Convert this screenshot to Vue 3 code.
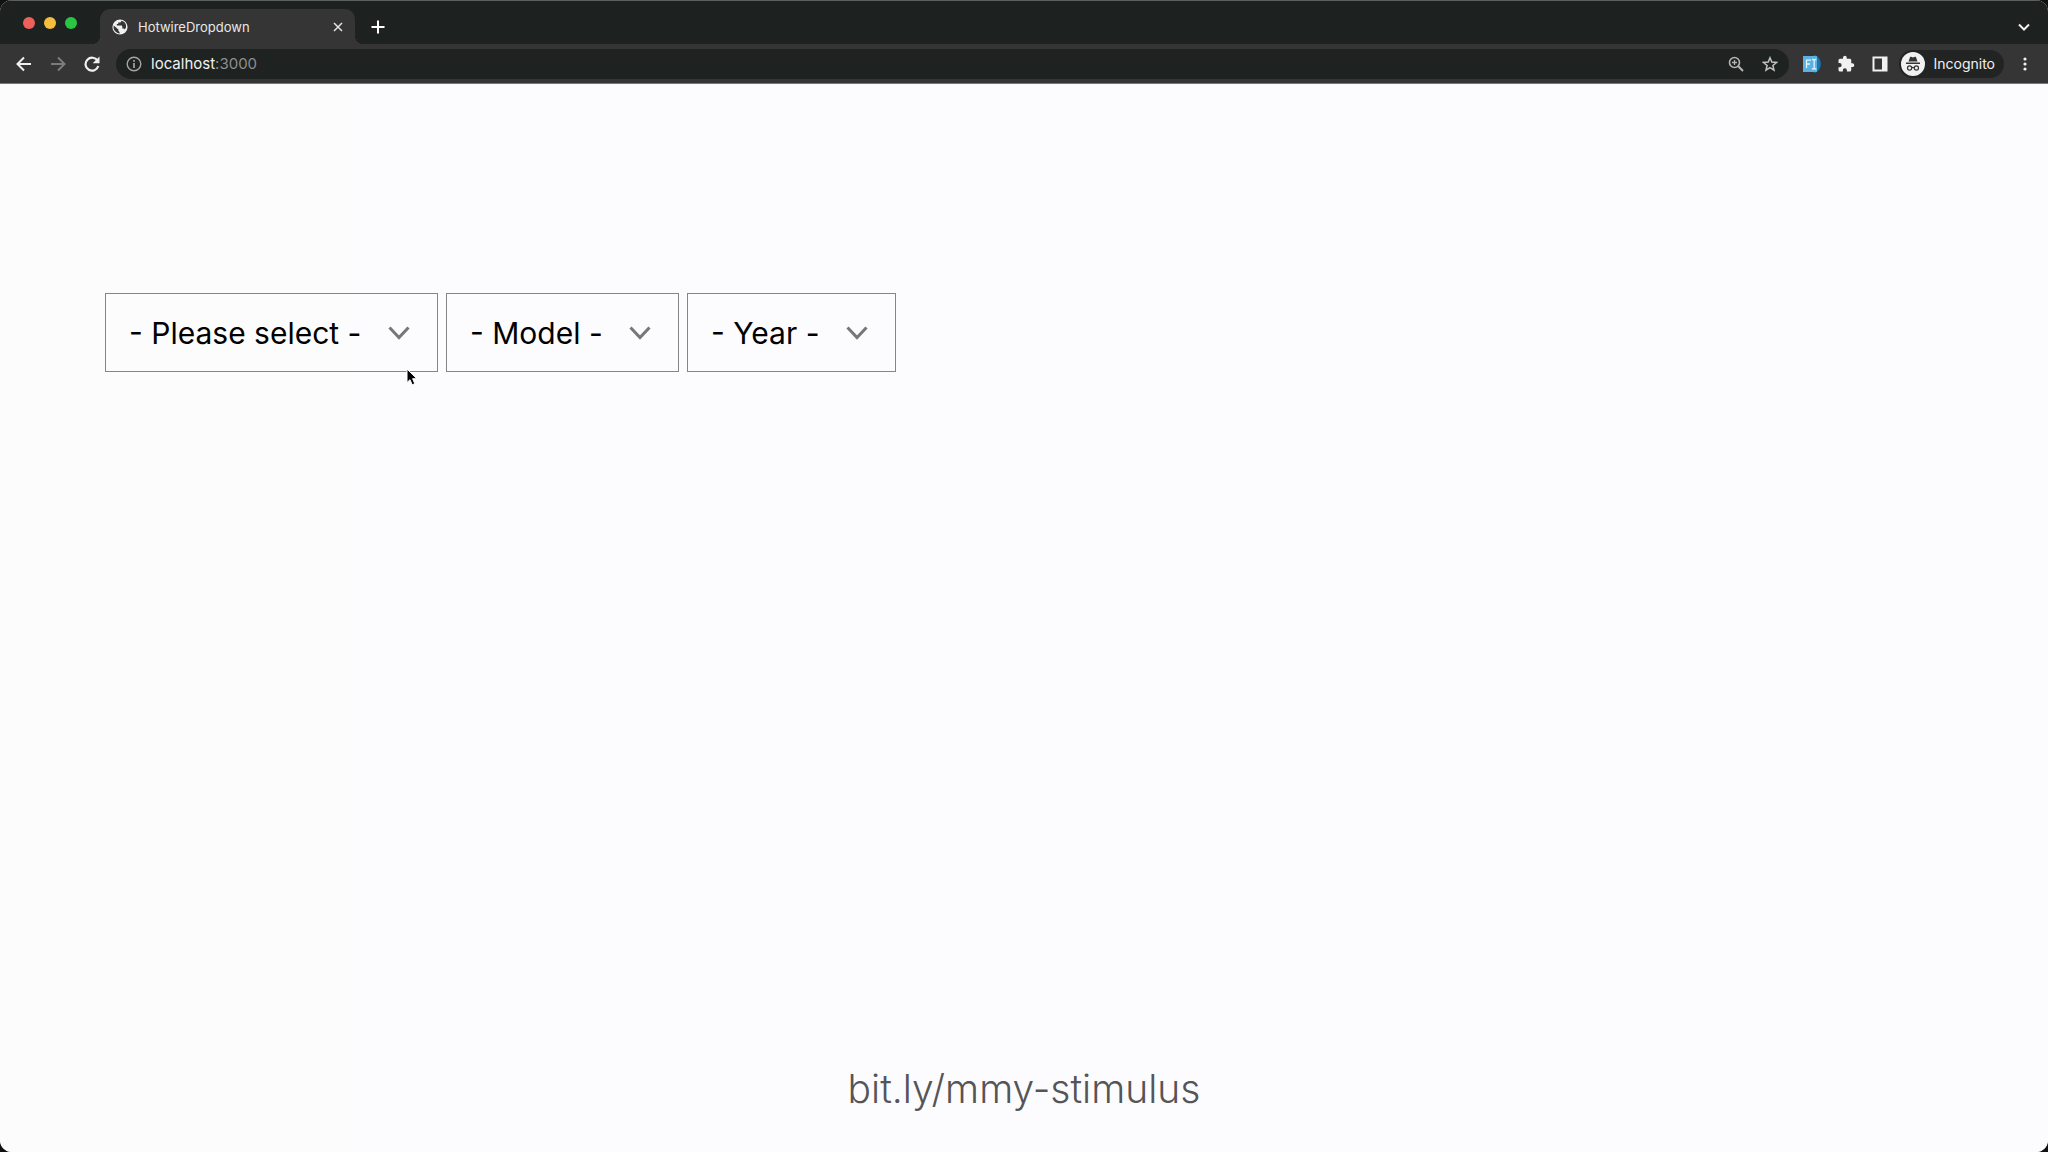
<script setup>
import { ref } from 'vue'

const address = ref('localhost:3000')
const selects = [
  { id: 'make', label: 'Make', prompt: '- Please select -' },
  { id: 'model', label: 'Model', prompt: '- Model -' },
  { id: 'year', label: 'Year', prompt: '- Year -' },
]
</script>

<template>
  <div class="desktop">
    <div class="window">
      <header class="tabstrip">
        <div class="lights">
          <button class="light red" aria-label="Close window"></button>
          <button class="light yellow" aria-label="Minimise window"></button>
          <button class="light green" aria-label="Zoom window"></button>
        </div>
        <div class="tab">
          <svg class="globe" viewBox="0 0 16 16" aria-hidden="true">
            <circle cx="8" cy="8" r="7.6" fill="#f1f1f1" />
            <path d="M1.7 6.6l4.7 4v1.2l1.2 1.4v1.3C3.6 14.2.8 10.6 1.7 6.6zM9.3 1.8c0 1.2-.7 1.8-1.8 1.8H6.2v1.5H4.8v1.5h4.6c.6 0 .9.4.9.9v2h1c.7 0 1.2.5 1.5 1.1C15.6 7.200 13.800 2.900 9.300 1.800z" fill="#353535" />
          </svg>
          <span class="title">HotwireDropdown</span>
          <button class="icon close" aria-label="Close tab">
            <svg viewBox="0 0 10 10" width="10" height="10"><path d="M1 1l8 8M9 1L1 9" stroke="#e4e4e4" stroke-width="1.5" /></svg>
          </button>
        </div>
        <button class="icon add" aria-label="New tab">
          <svg viewBox="0 0 14 14" width="14" height="14"><path d="M7 .5v13M.5 7h13" stroke="#fff" stroke-width="2" /></svg>
        </button>
        <button class="icon search-tabs" aria-label="Search tabs">
          <svg viewBox="0 0 12 8" width="12" height="8"><path d="M1 1.500l5 5 5-5" fill="none" stroke="#f1f1f1" stroke-width="2" /></svg>
        </button>
      </header>

      <nav class="toolbar">
        <button class="icon" aria-label="Back">
          <svg viewBox="0 0 16 16" width="16" height="16"><path d="M15 8H2M8 1.500L1.500 8 8 14.500" fill="none" stroke="#f1f1f1" stroke-width="2" /></svg>
        </button>
        <button class="icon" aria-label="Forward">
          <svg viewBox="0 0 16 16" width="16" height="16"><path d="M1 8h13M8 1.500L14.500 8 8 14.500" fill="none" stroke="#7c7c7c" stroke-width="2" /></svg>
        </button>
        <button class="icon" aria-label="Reload">
          <svg viewBox="0 0 16 16" width="16" height="16"><path d="M13.600 4.800A6.500 6.500 0 1 0 14.300 10" fill="none" stroke="#f1f1f1" stroke-width="2.200" /><path d="M15.500.5v6.800H8.700z" fill="#f1f1f1" /></svg>
        </button>
        <div class="omnibox">
          <svg viewBox="0 0 16 16" width="16" height="16" aria-hidden="true"><circle cx="8" cy="8" r="6.800" fill="none" stroke="#a5a5a5" stroke-width="1.400" /><path d="M8 7v5M8 4v1.800" stroke="#a5a5a5" stroke-width="1.700" /></svg>
          <a class="address" href="#" :aria-label="address">localhost<span class="port">:3000</span></a>
          <button class="icon" aria-label="Page zoom">
            <svg viewBox="0 0 16 16" width="16" height="16"><circle cx="6.500" cy="6.500" r="5" fill="none" stroke="#b5b5b5" stroke-width="1.600" /><path d="M10.300 10.300L15 15" stroke="#b5b5b5" stroke-width="2" /><path d="M6.500 4v5M4 6.500h5" stroke="#b5b5b5" stroke-width="1.300" /></svg>
          </button>
          <button class="icon" aria-label="Bookmark this page">
            <svg viewBox="0 0 16 16" width="16" height="16"><path d="M8 1.800l1.800 4.300 4.700.4-3.600 3 1.100 4.600L8 11.700l-4 2.400 1.100-4.600-3.600-3 4.700-.4z" fill="none" stroke="#c0c0c0" stroke-width="1.500" /></svg>
          </button>
        </div>
        <div class="extensions">
          <button class="icon" aria-label="Form filler">
            <svg viewBox="0 0 18 18" width="18" height="18"><path d="M11 0c9 2 9 16 0 18z" fill="#1677b4" /><path d="M0 1h14v16H0z" fill="#5ab2e2" /><path d="M3.500 13V5.200H8M3.500 9H7M9 4.500h1.200l1 1 1-1h1.200M9 14h1.200l1-1 1 1h1.200M11.200 5.500v7.500" fill="none" stroke="#e2f3fc" stroke-width="1.300" /></svg>
          </button>
          <button class="icon" aria-label="Extensions">
            <svg viewBox="0 0 24 24" width="18" height="18"><path d="M20.500 11H19V7c0-1.100-.9-2-2-2h-4V3.500a2.500 2.500 0 0 0-5 0V5H4a2 2 0 0 0-2 2v3.800h1.500a2.700 2.700 0 0 1 0 5.400H2V20c0 1.100.9 2 2 2h3.800v-1.500a2.700 2.700 0 0 1 5.400 0V22H17a2 2 0 0 0 2-2v-4h1.500a2.500 2.500 0 0 0 0-5z" fill="#f1f1f1" /></svg>
          </button>
          <button class="icon" aria-label="Side panel">
            <svg viewBox="0 0 16 16" width="16" height="16"><path d="M1.500 1.500h13v13h-13z" fill="none" stroke="#f1f1f1" stroke-width="2" /><path d="M10 1h5v14h-5z" fill="#f1f1f1" /></svg>
          </button>
        </div>
        <button class="profile">
          <svg viewBox="0 0 24 24" width="24" height="24" aria-hidden="true">
            <circle cx="12" cy="12" r="12" fill="#f1f1f1" />
            <path d="M7.500 9.500L9 5.200c.2-.5.600-.6 1-.4l2 .6 2-.6c.4-.2.800-.1 1 .4l1.500 4.300zM5 10.500h14v1.400H5z" fill="#333" />
            <path d="M10.700 15.700q1.300-.8 2.600 0" fill="none" stroke="#333" stroke-width="1.200" />
            <circle cx="8.600" cy="16" r="2.100" fill="none" stroke="#333" stroke-width="1.200" /><circle cx="15.400" cy="16" r="2.100" fill="none" stroke="#333" stroke-width="1.200" />
          </svg>
          Incognito
        </button>
        <button class="icon menu" aria-label="Browser menu">
          <svg viewBox="0 0 4 14" width="4" height="14"><g fill="#f1f1f1"><circle cx="2" cy="2" r="1.600" /><circle cx="2" cy="7" r="1.600" /><circle cx="2" cy="12" r="1.600" /></g></svg>
        </button>
      </nav>

      <main class="page">
        <form class="filters">
          <div v-for="item in selects" :key="item.id" class="field">
            <select :id="item.id" :aria-label="item.label"><option>{{ item.prompt }}</option></select>
            <svg class="chevron" viewBox="0 0 22 14" aria-hidden="true"><path d="M1.500 1.500L11 11.500l9.500-10" fill="none" stroke="#777" stroke-width="3" /></svg>
          </div>
          <svg class="pointer" viewBox="0 0 12 18" aria-hidden="true"><path d="M1 1v13.500l3-2.800 2.200 5.100 2.600-1.100-2.200-5h4.200z" fill="#000" stroke="#fff" /></svg>
        </form>
        <p class="caption">bit.ly/mmy-stimulus</p>
      </main>
    </div>
  </div>
</template>

<style>
body {
  margin: 0;
  background: #111;
}
</style>

<style scoped>
.desktop {
  background: #111;
  font-family: Inter, "Liberation Sans", sans-serif;
}
.window {
  display: flex;
  flex-direction: column;
  box-sizing: border-box;
  min-height: 100vh;
  overflow: hidden;
  border-radius: 12px;
  background: #fcfcfe;
}
button {
  margin: 0;
  padding: 0;
  border: 0;
  background: none;
  font: inherit;
  color: inherit;
}
.icon {
  display: flex;
  flex: none;
  align-items: center;
  justify-content: center;
  width: 18px;
  height: 18px;
}
.tabstrip {
  display: flex;
  align-items: flex-end;
  box-sizing: border-box;
  height: 44px;
  border-top: 1px solid #5c5f5f;
  background: #1d2221;
}
.lights {
  display: flex;
  gap: 9px;
  width: 77px;
  padding: 0 0 15px 23px;
}
.light {
  width: 12px;
  height: 12px;
  border-radius: 50%;
}
.red { background: #f0605a; }
.yellow { background: #f5bd3d; }
.green { background: #2ac643; }
.tab {
  position: relative;
  display: flex;
  align-items: center;
  box-sizing: border-box;
  width: 255px;
  height: 35px;
  padding: 0 8px 0 12px;
  border-radius: 10px 10px 0 0;
  background: #353535;
  color: #e8e8e8;
}
.tab::before,
.tab::after {
  content: "";
  position: absolute;
  bottom: 0;
  width: 8px;
  height: 8px;
}
.tab::before {
  right: 100%;
  background: radial-gradient(circle at 0 0, transparent 8px, #353535 8px);
}
.tab::after {
  left: 100%;
  background: radial-gradient(circle at 100% 0, transparent 8px, #353535 8px);
}
.globe {
  width: 16px;
  height: 16px;
  margin-right: 10px;
}
.title {
  flex: 1;
  font-size: 13px;
  line-height: 16px;
}
.add { margin: 0 0 8px 14px; }
.search-tabs { margin: 0 15px 8px auto; }
.toolbar {
  display: flex;
  align-items: center;
  gap: 16px;
  box-sizing: border-box;
  height: 40px;
  padding: 0 19px 0 15px;
  border-bottom: 1px solid #777;
  background: #353535;
  color: #f1f1f1;
}
.omnibox {
  display: flex;
  flex: 1;
  align-items: center;
  gap: 16px;
  box-sizing: border-box;
  height: 30px;
  margin-left: -1px;
  padding: 0 10px;
  border-radius: 15px;
  background: #1e2221;
}
.address {
  flex: 1;
  margin-left: -7px;
  color: #f1f1f1;
  font-size: 15px;
  line-height: 20px;
  text-decoration: none;
}
.port { color: #8d8f8f; }
.extensions {
  display: flex;
  gap: 16px;
  margin-left: -2px;
}
.profile {
  display: flex;
  align-items: center;
  gap: 8px;
  height: 28px;
  margin-left: -6px;
  padding: 0 9px 0 2px;
  border-radius: 14px;
  background: #222424;
  font-size: 14px;
  line-height: 20px;
}
.menu {
  margin-right: -5px;
  margin-left: -4px;
}
.page {
  display: flex;
  flex: 1;
  flex-direction: column;
  align-items: flex-start;
  justify-content: space-between;
  padding: 209px 105px 37px;
  background: linear-gradient(to right, #fcfcfc 350px, #fcfcff 350px);
}
.filters {
  position: relative;
  display: flex;
  gap: 8px;
}
.field {
  display: grid;
  align-items: center;
}
.field select,
.chevron { grid-area: 1 / 1; }
.field select {
  appearance: none;
  box-sizing: border-box;
  height: 79px;
  margin: 0;
  padding: 0 75px 0 23px;
  border: 1px solid #858585;
  border-radius: 0;
  background: transparent;
  color: #000;
  font: 30px/36px Inter, "Liberation Sans", sans-serif;
}
.chevron {
  justify-self: end;
  width: 22px;
  height: 14px;
  margin-right: 28px;
  pointer-events: none;
}
.pointer {
  position: absolute;
  top: 75px;
  left: 301px;
  width: 12px;
  height: 18px;
}
.caption {
  align-self: center;
  margin: 0;
  color: #555557;
  font-size: 39px;
  font-weight: 300;
  line-height: 52px;
}
</style>
